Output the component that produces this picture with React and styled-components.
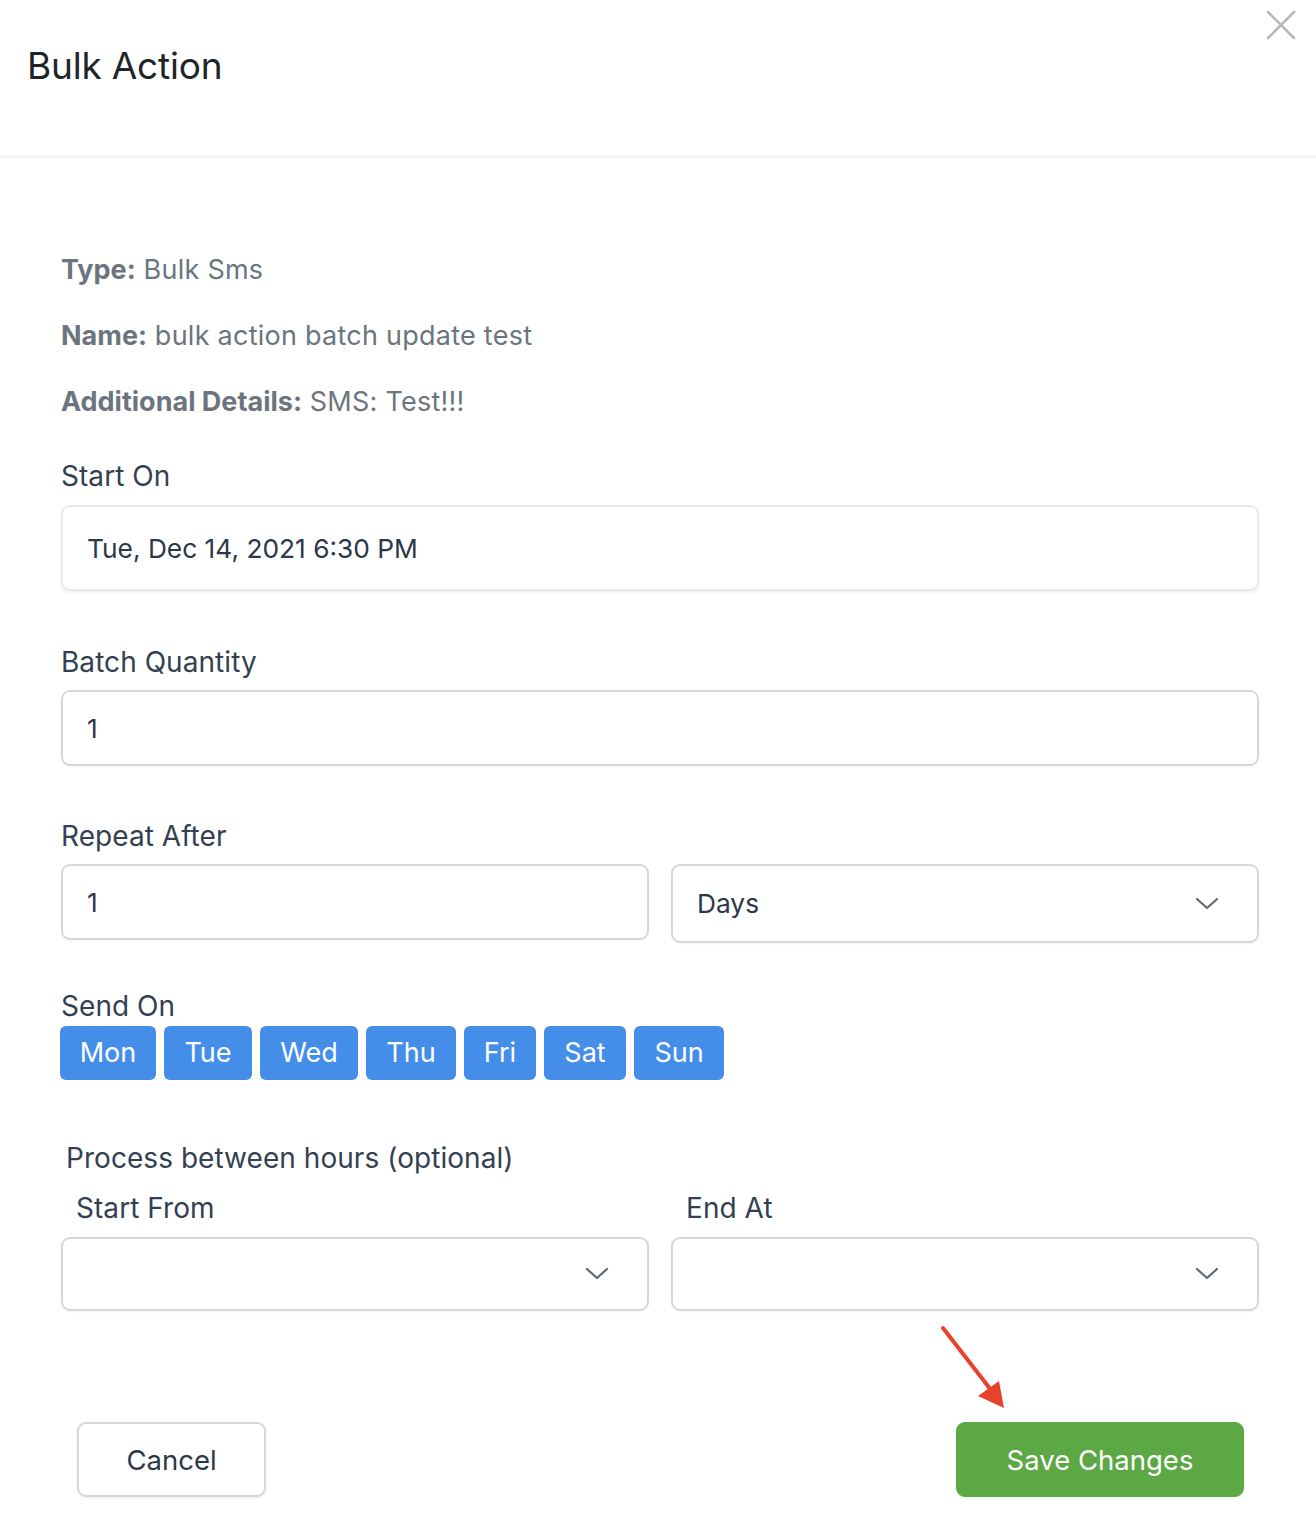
import React from "react";
import styled, { createGlobalStyle } from "styled-components";

const Global = createGlobalStyle`
  html, body { margin: 0; padding: 0; background: #fff; }
  body { font-family: Inter, "Noto Sans", sans-serif; -webkit-font-smoothing: antialiased; }
  * { box-sizing: border-box; }
`;

const Modal = styled.div`
  width: 1316px;
  min-height: 1518px;
  background: #fff;
  position: relative;
`;

const Header = styled.header`
  height: 158px;
  padding: 42px 27px 0;
  border-bottom: 3px solid #f1f4f8;
`;

const Title = styled.h1`
  margin: 0;
  font-size: 37px;
  line-height: 48px;
  font-weight: 400;
  color: #212529;
  letter-spacing: -0.2px;
`;

const CloseButton = styled.button`
  position: absolute;
  top: 9px;
  right: 19px;
  width: 32px;
  height: 32px;
  padding: 0;
  border: 0;
  background: none;
  display: flex;
  align-items: center;
  justify-content: center;
  cursor: pointer;
`;

const Body = styled.div`
  padding: 96px 57px 0 61px;
  display: flex;
  flex-direction: column;
`;

const InfoLine = styled.p`
  margin: 0 0 34px;
  font-size: 27px;
  line-height: 32px;
  letter-spacing: 0.25px;
  color: #6c757d;
  b { font-weight: 700; letter-spacing: 0; }
`;

const Label = styled.label`
  display: block;
  font-size: 28px;
  line-height: 34px;
  letter-spacing: 0.05px;
  color: #343f52;
  margin-top: ${(p) => p.$mt || 0}px;
  margin-bottom: ${(p) => (p.$mb ?? 12)}px;
  padding-left: ${(p) => p.$indent || 0}px;
`;

const Field = styled.div`
  height: ${(p) => p.$h}px;
  width: 100%;
  border: 2px solid ${(p) => (p.$soft ? "#e6e9ed" : "#d4d8dd")};
  border-radius: 9px;
  background: #fff;
  box-shadow: ${(p) => (p.$soft ? "0 2px 3px rgba(0,0,0,0.06)" : "0 1px 2px rgba(0,0,0,0.04)")};
  display: flex;
  align-items: center;
  justify-content: space-between;
  padding: 0 38px 0 24px;
  font-size: 26.3px;
  color: #2d3748;
`;

const Row = styled.div`
  display: grid;
  grid-template-columns: 1fr 1fr;
  column-gap: 22px;
  align-items: start;
`;

const Col = styled.div`
  display: flex;
  flex-direction: column;
`;

const Days = styled.div`
  display: flex;
  gap: 8px;
  margin-left: -1px;
`;

const DayButton = styled.button`
  height: 54px;
  width: ${(p) => p.$w}px;
  padding: 0;
  border: 0;
  border-radius: 6px;
  background: #448eea;
  color: #fff;
  font-family: inherit;
  font-size: 27px;
  line-height: 54px;
  text-align: center;
`;

const Footer = styled.div`
  position: relative;
  margin-top: 111px;
  padding: 0 15px 0 16px;
  display: flex;
  justify-content: space-between;
  align-items: flex-start;
`;

const Button = styled.button`
  height: 75px;
  width: ${(p) => p.$w}px;
  border-radius: 9px;
  font-family: inherit;
  font-size: 27.5px;
  border: 2px solid ${(p) => (p.$primary ? "#5ba845" : "#d4d8dd")};
  background: ${(p) => (p.$primary ? "#5ba845" : "#fff")};
  color: ${(p) => (p.$primary ? "#fff" : "#2d3748")};
  box-shadow: 0 1px 3px rgba(0,0,0,0.08);
`;

const Arrow = styled.svg`
  position: absolute;
  left: 878px;
  top: -98px;
  overflow: visible;
`;

const Chevron = () => (
  <svg width="24" height="14" viewBox="0 0 24 14" fill="none">
    <path d="M2 2 L12 11 L22 2" stroke="#5f6a75" strokeWidth="2.2" strokeLinecap="round" strokeLinejoin="round" />
  </svg>
);

const days = [
  ["Mon", 96],
  ["Tue", 88],
  ["Wed", 98],
  ["Thu", 90],
  ["Fri", 72],
  ["Sat", 82],
  ["Sun", 90],
];

export default function App() {
  return (
    <>
      <Global />
      <Modal>
        <Header>
          <Title>Bulk Action</Title>
        </Header>
        <CloseButton aria-label="Close">
          <svg width="30" height="30" viewBox="0 0 30 30">
            <path d="M2 2 L28 28 M28 2 L2 28" stroke="#b2b8be" strokeWidth="2.6" strokeLinecap="round" />
          </svg>
        </CloseButton>
        <Body>
          <InfoLine><b>Type:</b> Bulk Sms</InfoLine>
          <InfoLine><b>Name:</b> bulk action batch update test</InfoLine>
          <InfoLine><b>Additional Details:</b> SMS: Test!!!</InfoLine>

          <Label $mt={7}>Start On</Label>
          <Field $h={86} $soft>Tue, Dec 14, 2021 6:30 PM</Field>

          <Label $mt={54} $mb={11}>Batch Quantity</Label>
          <Field $h={76}>1</Field>

          <Label $mt={53} $mb={11}>Repeat After</Label>
          <Row>
            <Field $h={76}>1</Field>
            <Field $h={79}>Days<Chevron /></Field>
          </Row>

          <Label $mt={46} $mb={3}>Send On</Label>
          <Days>
            {days.map(([d, w]) => (
              <DayButton key={d} $w={w}>{d}</DayButton>
            ))}
          </Days>

          <Label $mt={61} $mb={16} $indent={5}>Process between hours (optional)</Label>
          <Row>
            <Col>
              <Label $indent={15}>Start From</Label>
              <Field $h={74}><span /><Chevron /></Field>
            </Col>
            <Col>
              <Label $indent={15}>End At</Label>
              <Field $h={74}><span /><Chevron /></Field>
            </Col>
          </Row>

          <Footer>
            <Button $w={189}>Cancel</Button>
            <Button $w={288} $primary>Save Changes</Button>
            <Arrow width="70" height="90" viewBox="0 0 70 90" aria-hidden="true">
              <path d="M4 4 L52 66" stroke="#e8412c" strokeWidth="4" strokeLinecap="round" />
              <path d="M65 84 L39 72 L60 57 Z" fill="#e8412c" />
            </Arrow>
          </Footer>
        </Body>
      </Modal>
    </>
  );
}
